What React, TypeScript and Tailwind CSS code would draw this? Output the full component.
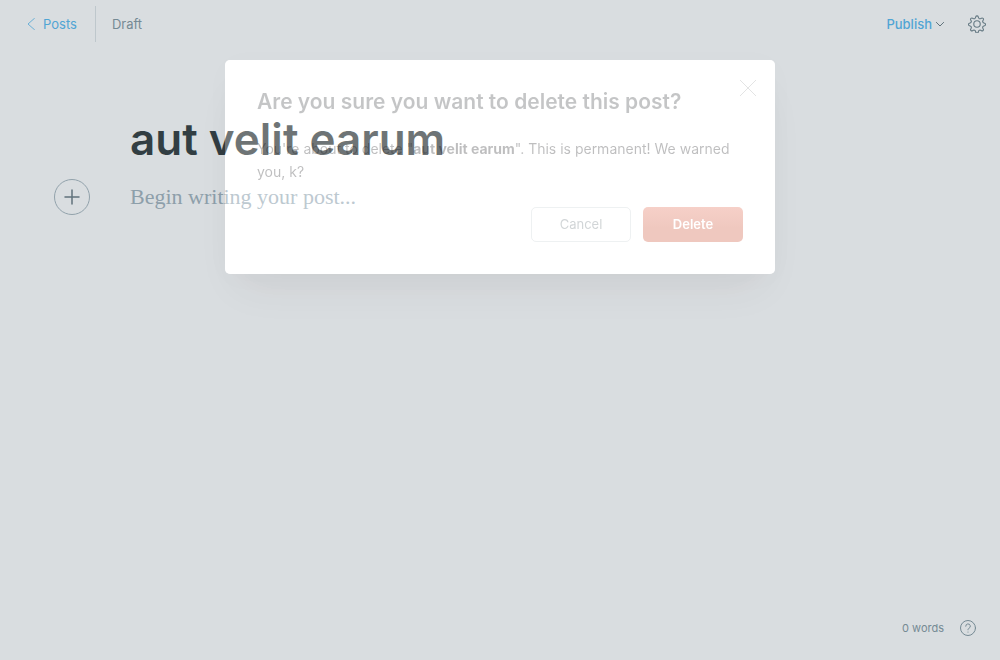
import React from 'react';

const post = { title: 'aut velit earum', status: 'Draft', words: 0 };

function ArrowLeft() {
  return (
    <svg className="h-3 w-2" viewBox="0 0 8 12" fill="none" stroke="currentColor" aria-hidden="true">
      <path d="M7.5 0.3 1 6l6.5 5.7" strokeWidth="0.8" strokeLinecap="round" strokeLinejoin="round" />
    </svg>
  );
}

function ChevronDown() {
  return (
    <svg className="h-2 w-2" viewBox="0 0 8 8" fill="none" stroke="#566a73" aria-hidden="true">
      <path d="M0.4 2.4 4 6l3.6-3.6" strokeLinecap="round" strokeLinejoin="round" />
    </svg>
  );
}

function Gear() {
  return (
    <svg className="h-[18px] w-[18px]" viewBox="0 0 24 24" fill="none" stroke="#5f757f" strokeWidth="1.5" strokeLinejoin="round" aria-hidden="true">
      <circle cx="12" cy="12" r="4.3" />
      <path d="M10.3 2.5c.5-1.7 2.9-1.7 3.4 0l.3 1a2.1 2.1 0 0 0 3 1.3l1-.6c1.6-.8 3.2.9 2.4 2.4l-.6 1a2.1 2.1 0 0 0 1.3 3l1 .3c1.7.5 1.7 2.9 0 3.4l-1 .3a2.1 2.1 0 0 0-1.3 3l.6 1c.8 1.5-.9 3.2-2.4 2.4l-1-.6a2.1 2.1 0 0 0-3 1.3l-.3 1c-.5 1.7-2.9 1.7-3.4 0l-.3-1a2.1 2.1 0 0 0-3-1.3l-1 .6c-1.5.8-3.2-.9-2.4-2.4l.6-1a2.1 2.1 0 0 0-1.3-3l-1-.3c-1.7-.5-1.7-2.9 0-3.4l1-.3a2.1 2.1 0 0 0 1.3-3l-.6-1c-.8-1.5.9-3.2 2.4-2.4l1 .6a2.1 2.1 0 0 0 3-1.3z" />
    </svg>
  );
}

function Help() {
  return (
    <svg className="h-4 w-4" viewBox="0 0 16 16" fill="none" stroke="currentColor" strokeLinecap="round" aria-hidden="true">
      <circle cx="8" cy="8" r="7.5" />
      <path d="M5.7 6.2a2.3 2.3 0 1 1 3.3 2.1c-.7.3-1 .7-1 1.5" />
      <circle cx="8" cy="12" r="0.6" fill="currentColor" stroke="none" />
    </svg>
  );
}

function Header() {
  return (
    <header className="flex h-12 items-center justify-between pr-3.5 pl-[27px] text-[13px] leading-5">
      <div className="flex items-center">
        <a href="#posts" className="flex items-center gap-2 pr-[18px] text-[#3eb0ef]">
          <ArrowLeft />
          Posts
        </a>
        <div className="flex h-9 items-center border-l border-[#dae1e3] pl-4 text-[#738a94]">{post.status}</div>
      </div>
      <div className="flex items-center gap-6">
        <button type="button" className="flex items-center gap-1 font-medium text-[#3eb0ef]">
          Publish
          <ChevronDown />
        </button>
        <button type="button" aria-label="Settings">
          <Gear />
        </button>
      </div>
    </header>
  );
}

function Editor() {
  return (
    <main className="flex-1 px-[54px] pt-[61px]">
      <h1 className="ml-[76px] text-[44px] leading-[60px] font-semibold text-[#151f23]">{post.title}</h1>
      <div className="mt-2.5 flex items-center gap-10">
        <button
          type="button"
          aria-label="Add a card"
          className="flex h-9 w-9 shrink-0 items-center justify-center rounded-full border border-[#9bacb5] text-[#566a73]"
        >
          <svg className="h-4 w-4" viewBox="0 0 16 16" stroke="currentColor" strokeWidth="1.5" strokeLinecap="round" aria-hidden="true">
            <path d="M8 1v14M1 8h14" />
          </svg>
        </button>
        <textarea
          aria-label="Post content"
          rows={1}
          placeholder="Begin writing your post..."
          className="h-8 flex-1 resize-none overflow-hidden bg-transparent font-[Georgia,'Liberation_Serif',serif] text-[22px] leading-8 outline-none placeholder:text-[#95a8b4]"
        />
      </div>
    </main>
  );
}

function DeleteDialog() {
  return (
    <div className="fixed inset-0 overflow-hidden px-4 pt-[60px]">
      <section
        role="dialog"
        aria-modal="true"
        aria-labelledby="delete-title"
        className="relative mx-auto max-w-[550px] rounded-[5px] bg-white/38 p-8 pt-7 shadow-[0_24px_40px_-14px_rgba(50,20,20,0.08),0_4px_30px_rgba(20,20,20,0.02),0_0_0_200vmax_rgba(124,139,147,0.29)]"
      >
        <h2 id="delete-title" className="text-[21px] leading-7 font-semibold text-[#15171a]/25">
          Are you sure you want to delete this post?
        </h2>
        <button type="button" aria-label="Close" className="absolute top-5 right-[19px] text-[#15171a]/15">
          <svg className="h-4 w-4" viewBox="0 0 16 16" stroke="currentColor" strokeWidth="0.8" aria-hidden="true">
            <path d="M0 0l16 16M16 0L0 16" />
          </svg>
        </button>
        <p className="mt-[21px] text-[14px] leading-[23px] text-[#15171a]/28">
          You're about to delete "<strong className="font-bold">{post.title}</strong>". This is permanent! We warned you, k?
        </p>
        <div className="mt-6 flex justify-end gap-3 text-[13px]">
          <button type="button" className="h-[35px] w-[100px] rounded-[5px] border border-[#738a94]/12 text-[#5b686e]/28">
            Cancel
          </button>
          <button type="button" className="h-[35px] w-[100px] rounded-[5px] bg-linear-to-b from-[#f6d0c8] to-[#efc8bf] to-60% font-semibold text-white">
            Delete
          </button>
        </div>
      </section>
    </div>
  );
}

export default function App() {
  return (
    <div className="flex min-h-screen flex-col bg-white font-[Inter,'Liberation_Sans',sans-serif]">
      <Header />
      <Editor />
      <footer className="flex items-center justify-end gap-4 px-6 pb-6 text-[11px] text-[#738a94]">
        <span>{post.words} words</span>
        <button type="button" aria-label="Help">
          <Help />
        </button>
      </footer>
      <DeleteDialog />
    </div>
  );
}
